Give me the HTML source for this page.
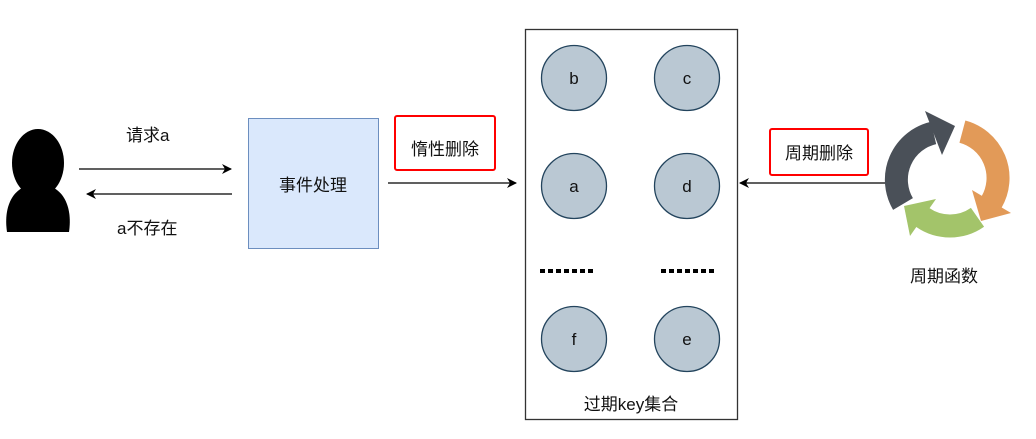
<!DOCTYPE html>
<html><head><meta charset="utf-8"><style>
html,body{margin:0;padding:0;background:#fff;}
svg{display:block}
text{font-family:"Liberation Sans","Noto Sans CJK SC",sans-serif;fill:#111;}
</style></head><body>
<svg width="1036" height="439" viewBox="0 0 1036 439" xmlns="http://www.w3.org/2000/svg">
<defs>
<marker id="ah" viewBox="0 0 10 10" refX="9" refY="5" markerWidth="10" markerHeight="10" markerUnits="userSpaceOnUse" orient="auto">
<path d="M0,0 L10,5 L0,10 L3,5 z" fill="#000"/></marker>
</defs>
<ellipse cx="38" cy="163" rx="26" ry="34" fill="#000"/>
<path d="M7,232 C3,205 14,184 38,184 C62,184 73,205 69,232 Z" fill="#000"/>
<line x1="79" y1="169" x2="231" y2="169" stroke="#000" stroke-width="1.3" marker-end="url(#ah)"/>
<line x1="232" y1="194" x2="87" y2="194" stroke="#000" stroke-width="1.3" marker-end="url(#ah)"/>
<text x="126" y="141" font-size="17">请求a</text>
<text x="117" y="234" font-size="17">a不存在</text>
<rect x="248.5" y="118.5" width="130" height="130" fill="#dae8fc" stroke="#6c8ebf" stroke-width="1"/>
<text x="313" y="191" font-size="17" text-anchor="middle">事件处理</text>
<line x1="388" y1="183" x2="516" y2="183" stroke="#000" stroke-width="1.3" marker-end="url(#ah)"/>
<rect x="395" y="116" width="100" height="54" fill="#fff" stroke="#f00" stroke-width="2" rx="2"/>
<text x="445" y="155" font-size="17" text-anchor="middle">惰性删除</text>
<rect x="525.5" y="29.5" width="212" height="390" fill="#fff" stroke="#333" stroke-width="1.3"/>
<g fill="#bac8d3" stroke="#23445d" stroke-width="1.3">
<circle cx="574" cy="78" r="32.5"/><circle cx="687" cy="78" r="32.5"/>
<circle cx="574" cy="186" r="32.5"/><circle cx="687" cy="186" r="32.5"/>
<circle cx="574" cy="339" r="32.5"/><circle cx="687" cy="339" r="32.5"/>
</g>
<g font-size="17" text-anchor="middle">
<text x="574" y="84">b</text><text x="687" y="84">c</text>
<text x="574" y="192">a</text><text x="687" y="192">d</text>
<text x="574" y="345">f</text><text x="687" y="345">e</text>
</g>
<line x1="540" y1="271" x2="593" y2="271" stroke="#000" stroke-width="4" stroke-dasharray="5,3"/>
<line x1="661" y1="271" x2="714" y2="271" stroke="#000" stroke-width="4" stroke-dasharray="5,3"/>
<text x="631" y="410" font-size="17" text-anchor="middle">过期key集合</text>
<line x1="888" y1="183" x2="740" y2="183" stroke="#000" stroke-width="1.3" marker-end="url(#ah)"/>
<rect x="770" y="129" width="98" height="46" fill="#fff" stroke="#f00" stroke-width="2" rx="2"/>
<text x="819" y="159" font-size="17" text-anchor="middle">周期删除</text>
<g stroke-width="23" fill="none">
<path d="M903,204 A48,48 0 0 1 933.6,132.9" stroke="#4a5058"/>
<path d="M962.4,131.6 A48,48 0 0 1 991.6,202" stroke="#e29a58"/>
<path d="M977.5,217.3 A48,48 0 0 1 922.5,217.3" stroke="#a3c46a"/>
</g>
<path d="M925,111 L955,126 L942,155 Z" fill="#4a5058"/>
<path d="M1011,213 L981,221 L972,190 Z" fill="#e29a58"/>
<path d="M910,236 L904,206 L936,199 Z" fill="#a3c46a"/>
<text x="944" y="282" font-size="17" text-anchor="middle">周期函数</text>
</svg>
</body></html>
